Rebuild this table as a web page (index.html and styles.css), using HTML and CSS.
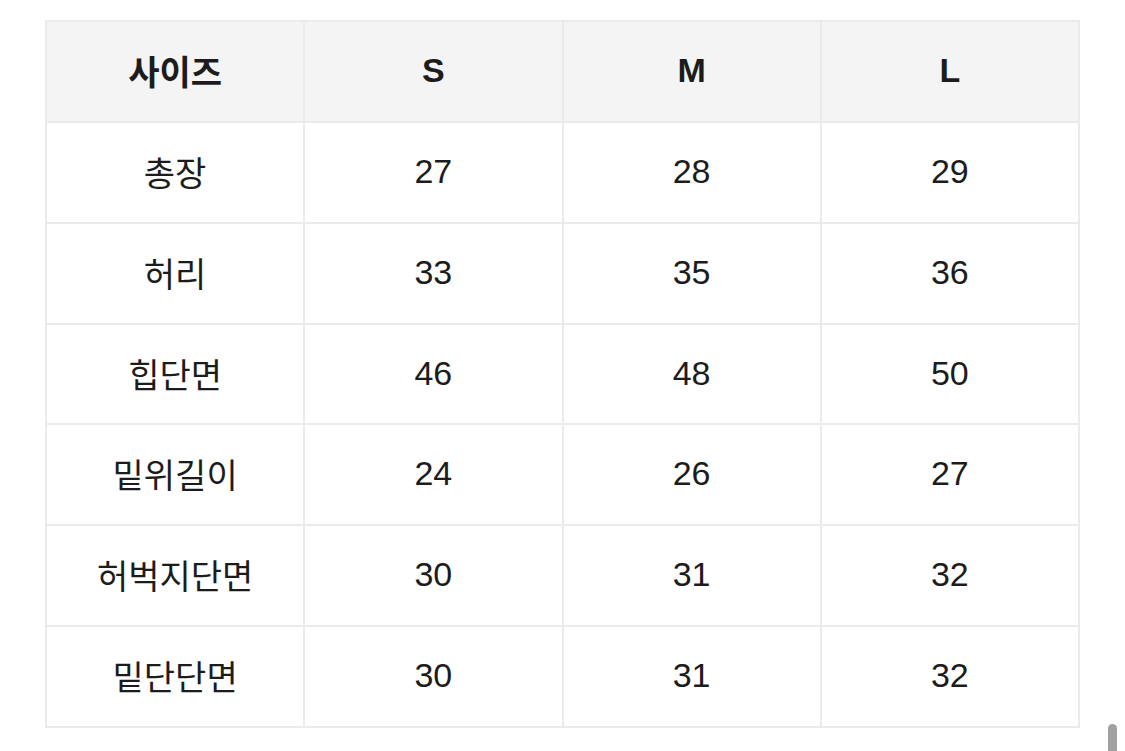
FILE: index.html
```html
<!DOCTYPE html>
<html lang="ko">
<head>
<meta charset="utf-8">
<link rel="stylesheet" href="styles.css">
</head>
<body>
<div class="page">
  <table class="size-table">
    <thead>
      <tr><th>사이즈</th><th>S</th><th>M</th><th>L</th></tr>
    </thead>
    <tbody>
      <tr><td>총장</td><td>27</td><td>28</td><td>29</td></tr>
      <tr><td>허리</td><td>33</td><td>35</td><td>36</td></tr>
      <tr><td>힙단면</td><td>46</td><td>48</td><td>50</td></tr>
      <tr><td>밑위길이</td><td>24</td><td>26</td><td>27</td></tr>
      <tr><td>허벅지단면</td><td>30</td><td>31</td><td>32</td></tr>
      <tr><td>밑단단면</td><td>30</td><td>31</td><td>32</td></tr>
    </tbody>
  </table>
</div>
<div class="scroll-thumb"></div>
</body>
</html>
```
FILE: styles.css
```css
html, body {
  margin: 0;
  padding: 0;
  background: #ffffff;
  overflow: hidden;
  height: 751px;
}
.page {
  padding: 20px 0 0 45px;
}
.size-table {
  width: 1035px;
  border-collapse: collapse;
  table-layout: fixed;
  font-family: "Liberation Sans", "Noto Sans CJK KR", sans-serif;
  font-size: 34px;
  color: #1c1c1c;
}
.size-table th,
.size-table td {
  border: 2px solid #ebebeb;
  height: 96.86px;
  padding: 0 0 2px 0;
  text-align: center;
  vertical-align: middle;
}
.size-table th {
  background: #f4f4f4;
  font-weight: 700;
}
.size-table td {
  font-weight: 400;
}
.scroll-thumb {
  position: absolute;
  left: 1108px;
  top: 724px;
  width: 9px;
  height: 40px;
  border-radius: 5px;
  background: #a0a0a0;
}
```
